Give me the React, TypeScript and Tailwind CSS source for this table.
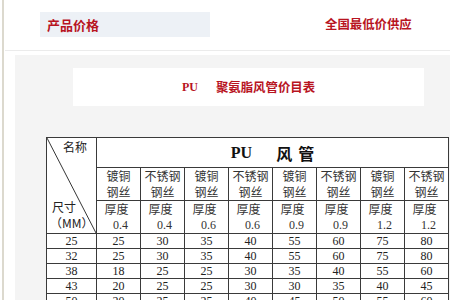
import React from 'react';

const red = 'text-[#b8141f]';
const cjk = { fontFamily: '"Noto Sans CJK SC", sans-serif' };
const serif = { fontFamily: '"Liberation Serif", "Noto Sans CJK SC", serif' };

const wires = ['镀铜', '不锈钢', '镀铜', '不锈钢', '镀铜', '不锈钢', '镀铜', '不锈钢'];
const thick = ['0.4', '0.4', '0.6', '0.6', '0.9', '0.9', '1.2', '1.2'];
const rows: [string, string[]][] = [
  ['25', ['25', '30', '35', '40', '55', '60', '75', '80']],
  ['32', ['25', '30', '35', '40', '55', '60', '75', '80']],
  ['38', ['18', '25', '25', '30', '35', '40', '55', '60']],
  ['43', ['20', '25', '25', '30', '30', '35', '40', '45']],
  ['50', ['20', '25', '25', '40', '45', '50', '55', '60']],
];

const cell = 'border border-[#3a3a3a] p-0 text-center';

export default function App() {
  return (
    <div className="w-[450px] h-[300px] overflow-hidden bg-white">
      <div className="ml-[2px] h-full border-l-2 border-[#dcd9ce]">
        {/* top bar */}
        <div className="h-[50px] pt-[12px] flex items-start">
          <div className="ml-[36px] w-[170px] h-[25px] bg-[#edf1f6] flex items-center pl-[7px]">
            <span className={`text-[13px] font-bold ${red} leading-none`} style={cjk}>产品价格</span>
          </div>
          <span className={`ml-[115px] mt-[6px] text-[12.4px] font-bold ${red} leading-none`} style={cjk}>
            全国最低价供应
          </span>
        </div>

        {/* panel */}
        <div className="ml-[1px] border-t border-[#ebebeb] h-full">
          <div className="ml-[10px] mt-[4px] bg-[#f4f4f4] h-full pt-[13px]">
            <div className="ml-[58px] w-[351px] h-[38px] bg-white flex items-center justify-center">
              <span className={`text-[12px] font-bold ${red}`} style={serif}>PU</span>
              <span className={`ml-[18px] text-[12.4px] font-bold ${red}`} style={cjk}>聚氨脂风管价目表</span>
            </div>

            <table
              className="ml-[31px] mt-[31px] table-fixed border-collapse bg-white text-[12px] text-[#222]"
              style={serif}
            >
              <colgroup>
                <col className="w-[50px]" />
                {wires.map((_, i) => (
                  <col key={i} className="w-[44px]" />
                ))}
              </colgroup>
              <tbody>
                <tr className="h-[30px]">
                  <td rowSpan={3} className={`${cell} relative align-top`} style={cjk}>
                    <svg className="absolute inset-0 w-full h-full" preserveAspectRatio="none" viewBox="0 0 50 95">
                      <line x1="0" y1="0" x2="50" y2="95" stroke="#333" strokeWidth="1" />
                    </svg>
                    <div className="relative h-[94px] flex flex-col justify-between text-[12px] leading-[16px]">
                      <div className="text-right pr-[9px] pt-[1px]">名称</div>
                      <div className="text-left pl-[5px] pb-[1px]">
                        <div>尺寸</div>
                        <div className="-ml-[2px]">（MM）</div>
                      </div>
                    </div>
                  </td>
                  <td colSpan={8} className={cell}>
                    <div className="flex items-center justify-center text-[16px] font-bold text-[#111] leading-none">
                      <span style={serif}>PU</span>
                      <span className="ml-[24px]" style={cjk}>风</span>
                      <span className="ml-[6px]" style={cjk}>管</span>
                    </div>
                  </td>
                </tr>
                <tr className="h-[32px]">
                  {wires.map((w, i) => (
                    <td key={i} className={`${cell} leading-[16px] text-[#333]`} style={cjk}>
                      <div>{w}</div>
                      <div>钢丝</div>
                    </td>
                  ))}
                </tr>
                <tr className="h-[33px]">
                  {thick.map((t, i) => (
                    <td key={i} className={`${cell} leading-[16px] text-[#333]`}>
                      <div className="pr-[4px]" style={cjk}>厚度</div>
                      <div className="pl-[4px]">{t}</div>
                    </td>
                  ))}
                </tr>
                {rows.map(([size, vals]) => (
                  <tr key={size} className="h-[15px]">
                    <td className={`${cell} leading-[14px]`}>{size}</td>
                    {vals.map((v, i) => (
                      <td key={i} className={`${cell} leading-[14px]`}>{v}</td>
                    ))}
                  </tr>
                ))}
              </tbody>
            </table>
          </div>
        </div>
      </div>
    </div>
  );
}
